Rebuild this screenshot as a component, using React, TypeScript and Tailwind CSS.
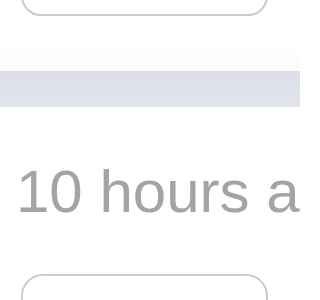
export default function App() {
  return (
    <div className="w-[300px] h-[300px] overflow-hidden bg-white flex flex-col font-['Liberation_Sans',Arial,sans-serif]">
      {/* card above, only its lower edge shows */}
      <div className="ml-[21px] w-[247px] h-[40px] -mt-[24px] shrink-0 rounded-[22px] border-2 border-[#cbcbcb]" />

      <div className="mt-[24px] h-[31px] shrink-0 bg-gradient-to-b from-white to-[#fbfbfb]" />
      <div className="h-[36px] shrink-0 bg-gradient-to-b from-[#dcdfe8] to-[#e3e5ed]" />

      <div className="mt-[55px] pl-[16px] text-[60px] leading-[60px] text-[#a4a4a4] whitespace-nowrap">
        10 hours ago
      </div>

      <div className="mt-[52px] ml-[21px] w-[247px] h-[60px] shrink-0 rounded-[22px] border-2 border-[#cbcbcb]" />
    </div>
  )
}
